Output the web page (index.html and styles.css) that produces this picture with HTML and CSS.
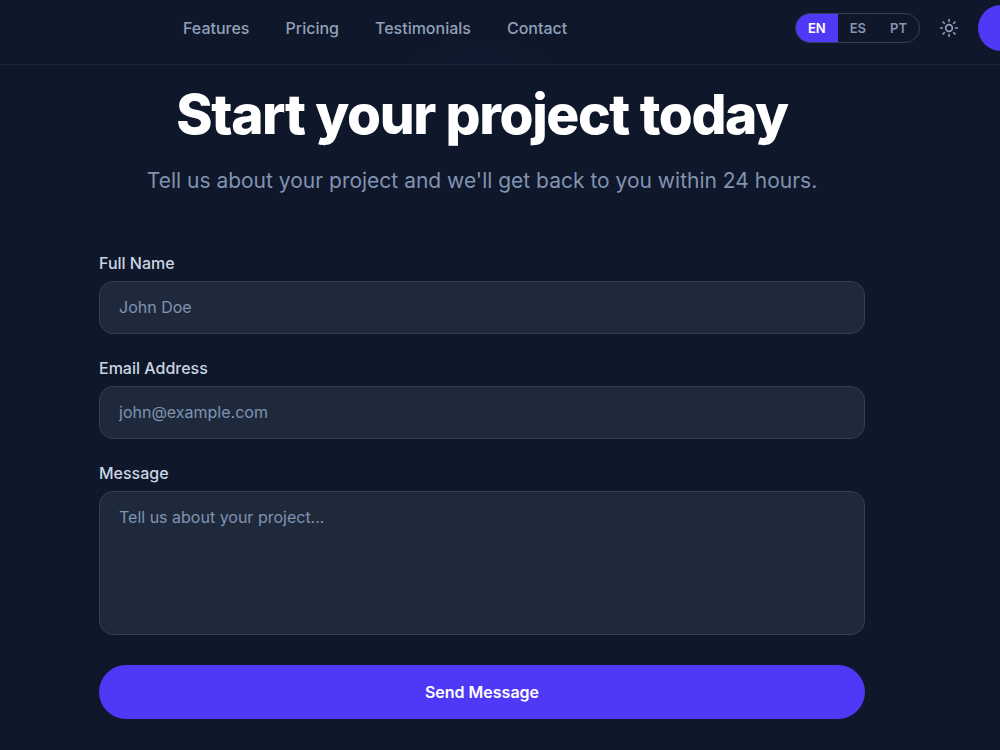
FILE: index.html
```html
<!DOCTYPE html>
<html lang="en">
<head>
<meta charset="utf-8">
<meta name="viewport" content="width=device-width, initial-scale=1">
<title>Start your project today</title>
<link rel="stylesheet" href="styles.css">
</head>
<body>
<header class="header">
  <nav class="nav" aria-label="Main">
    <a href="#features">Features</a>
    <a href="#pricing">Pricing</a>
    <a href="#testimonials">Testimonials</a>
    <a href="#contact">Contact</a>
  </nav>
  <div class="actions">
    <div class="languages" role="group" aria-label="Language">
      <button class="language language-active" type="button" aria-pressed="true">EN</button>
      <button class="language" type="button" aria-pressed="false">ES</button>
      <button class="language" type="button" aria-pressed="false">PT</button>
    </div>
    <button class="theme" type="button" aria-label="Toggle theme">
      <svg width="20" height="20" viewBox="0 0 24 24" fill="none" stroke="currentColor" stroke-width="2" stroke-linecap="round" stroke-linejoin="round" aria-hidden="true"><circle cx="12" cy="12" r="4"/><path d="M12 2v2M12 20v2M4.93 4.93l1.41 1.41M17.66 17.66l1.41 1.41M2 12h2M20 12h2M6.34 17.66l-1.41 1.41M19.07 4.93l-1.41 1.41"/></svg>
    </button>
    <button class="cta" type="button" aria-label="Get started"></button>
  </div>
</header>
<main class="contact" id="contact">
  <h1 class="title">Start your project today</h1>
  <p class="subtitle">Tell us about your project and we'll get back to you within 24 hours.</p>
  <form class="form">
    <div class="field">
      <label for="name">Full Name</label>
      <input class="control" id="name" type="text" placeholder="John Doe">
    </div>
    <div class="field">
      <label for="email">Email Address</label>
      <input class="control" id="email" type="email" placeholder="john@example.com">
    </div>
    <div class="field">
      <label for="message">Message</label>
      <textarea class="control message" id="message" placeholder="Tell us about your project..."></textarea>
    </div>
    <button class="submit" type="submit">Send Message</button>
  </form>
</main>
</body>
</html>
```

FILE: styles.css
```css
*, *::before, *::after {
  box-sizing: border-box;
}

body {
  margin: 0;
  background: #0f172a;
  color: #fff;
  font-family: Inter, "Liberation Sans", sans-serif;
  font-size: 16px;
  font-optical-sizing: none;
  line-height: 24px;
}

button, input, textarea {
  font: inherit;
}

button {
  padding: 0;
  border: 0;
  background: none;
  color: inherit;
  cursor: pointer;
}

.header {
  display: flex;
  align-items: center;
  justify-content: space-between;
  padding: 5px 0 13px 183px;
  border-bottom: 1px solid #1b273b;
  overflow: hidden;
  background: radial-gradient(ellipse 70px 20px at 480px 60px, #10183190, #0f172a);
}

.nav {
  display: flex;
  gap: 36px;
}

.nav a {
  color: #90a1b9;
  font-weight: 500;
  text-decoration: none;
}

.actions {
  display: flex;
  align-items: center;
  gap: 19px;
  margin-right: -120px;
}

.languages {
  display: flex;
  border: 1px solid #314158;
  border-radius: 15px;
  overflow: hidden;
}

.language {
  padding: 0 12px;
  color: #8495ae;
  font-size: 13px;
  font-weight: 600;
  line-height: 28px;
}

.language-active {
  background: #4f39f6;
  color: #fff;
}

.theme {
  display: flex;
  color: #90a1b9;
}

.cta {
  width: 142px;
  height: 46px;
  border-radius: 23px;
  background: #4f39f6;
}

.contact {
  padding: 16px 36px 30px 0;
}

.title {
  margin: 0;
  font-size: 55px;
  font-weight: 800;
  line-height: 66px;
  letter-spacing: -0.025em;
  text-align: center;
}

.subtitle {
  margin: 18px 0 54px;
  color: #8093b0;
  font-size: 21px;
  line-height: 32px;
  text-align: center;
}

.form {
  display: grid;
  gap: 22px;
  max-width: 766px;
  margin: 0 auto;
}

.field {
  display: grid;
  gap: 6px;
}

.field label {
  color: #cad5e2;
  font-weight: 500;
}

.control {
  width: 100%;
  padding: 13px 19px;
  border: 1px solid #2f3f55;
  border-radius: 14px;
  background: #1e2a3c;
  color: #fff;
  line-height: 25px;
}

.control::placeholder {
  color: #8093b0;
}

.message {
  display: block;
  height: 144px;
  resize: none;
}

.submit {
  height: 54px;
  margin-top: 8px;
  border-radius: 27px;
  background: #4f39f6;
  font-weight: 600;
}
```
